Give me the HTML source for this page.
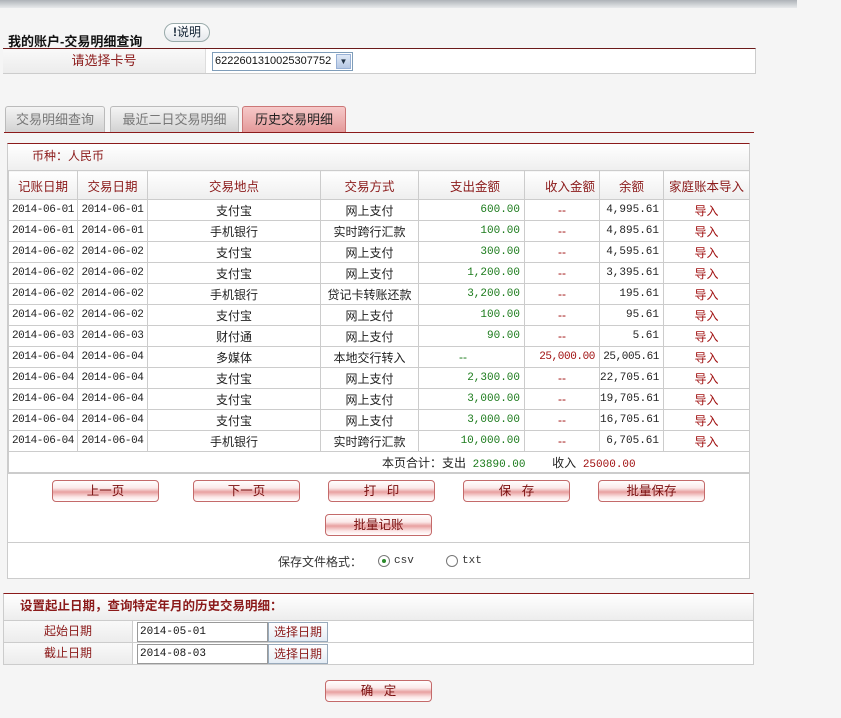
<!DOCTYPE html>
<html><head><meta charset="utf-8">
<style>
*{margin:0;padding:0;box-sizing:border-box}
body{width:841px;height:718px;background:#f5f5f5;font-family:"Liberation Sans","Noto Sans CJK SC",sans-serif;font-size:12px;color:#333;position:relative;overflow:hidden}
.a{position:absolute}
.topbar{left:0;top:0;width:797px;height:8px;background:linear-gradient(#aeb3b8,#e8eaec)}
.title{left:8px;top:31px;font-size:13px;font-weight:bold;color:#111}
.help{left:164px;top:23px;width:46px;height:19px;border:1px solid #9aa;border-radius:10px;background:linear-gradient(#fff,#e4e8ec);font-size:12px;line-height:17px;text-align:center;color:#123}
.cardrow{left:3px;top:48px;width:753px;height:26px;border-top:1px solid #6b1a1a;border-bottom:1px solid #ccc;border-right:1px solid #ccc;background:#fff}
.cardlbl{left:3px;top:49px;width:203px;height:24px;background:linear-gradient(#f9f9f9,#ececec);border-right:1px solid #ddd;color:#8b1a1a;text-align:center;line-height:24px;font-size:13px}
.sel{left:212px;top:52px;width:141px;height:19px;border:1px solid #7f9db9;background:#fff;font-size:11px;line-height:17px;padding-left:2px;color:#111;white-space:nowrap;overflow:hidden}
.selbtn{right:1px;top:1px;width:15px;height:15px;background:linear-gradient(#dfe8f6,#b6c8e4);border:1px solid #98b1d6;font-size:8px;line-height:13px;text-align:center;color:#234}
.tab{top:106px;height:26px;border:1px solid #bbb;border-bottom:none;border-radius:3px 3px 0 0;background:linear-gradient(#f4f4f4,#d2d2d2);color:#777;font-size:13px;text-align:center;line-height:25px}
.tab.on{background:linear-gradient(#f6c9c9,#e49a9a);color:#222;border-color:#c77}
.tabline{left:4px;top:132px;width:750px;height:1px;background:#8b1a1a}
.box{left:7px;top:143px;width:743px;height:436px;border:1px solid #ccc;border-top:1px solid #8b1a1a;background:#fff}
.cur{left:8px;top:144px;width:741px;height:26px;background:linear-gradient(#fff,#efefef);color:#8b1a1a;line-height:24px;padding-left:24px}
table{position:absolute;left:8px;top:170px;width:741px;border-collapse:collapse;table-layout:fixed;background:#fff}
td{border:1px solid #ccc;height:21px;font-size:12px;white-space:nowrap;overflow:hidden;text-align:center;color:#222;padding:0}
tr.h td{height:29px;color:#8b1a1a;background:linear-gradient(#fff,#eee);font-size:12.5px}
td.r{text-align:right;padding-right:4px}
.g{color:#1a7a1a}.rd{color:#a01010}.m{font-family:"Liberation Mono","Noto Sans CJK SC",monospace;font-size:11px}
td.d{letter-spacing:-0.4px}
.btn{height:22px;border:1px solid #c46a6a;border-radius:4px;background:linear-gradient(#fff 0%,#fbe9e9 35%,#e8a0a0 55%,#fbe6e6 80%,#fff 100%);color:#7a0e0e;text-align:center;line-height:20px;font-size:12.5px}
.div1{left:8px;top:542px;width:741px;height:1px;background:#ccc}
.radio{width:12px;height:12px;border:1px solid #777;border-radius:50%;background:#fff}
.radio.on::after{content:"";position:absolute;left:3px;top:3px;width:4px;height:4px;border-radius:50%;background:#2a8a2a}
.b2{left:3px;top:593px;width:751px;height:72px;border:1px solid #ccc;border-top:1px solid #8b1a1a;background:#fff}
.b2h{left:4px;top:594px;width:749px;height:27px;background:linear-gradient(#fff,#ededed);color:#8b1a1a;font-weight:bold;font-size:12.5px;padding-left:16px;line-height:24px;border-bottom:1px solid #ccc}
.b2r{left:4px;width:749px;height:22px;border-bottom:1px solid #ccc}
.b2l{left:4px;width:129px;height:21px;background:linear-gradient(#f9f9f9,#ececec);border-right:1px solid #ccc;color:#8b1a1a;text-align:center;line-height:20px}
.inp{left:137px;width:131px;height:20px;border:1px solid #999;background:#fff;padding-left:2px;line-height:18px;color:#111}
.pick{left:268px;width:60px;height:20px;border:1px solid #9ab;background:linear-gradient(#fff,#e4ecf4);color:#8b1a1a;text-align:center;line-height:18px}
</style></head><body>
<div class="a topbar"></div>
<div class="a title">我的账户-交易明细查询</div>
<div class="a help"><b style="color:#123">!</b>说明</div>
<div class="a cardrow"></div>
<div class="a cardlbl">请选择卡号</div>
<div class="a sel">6222601310025307752<div class="a selbtn">▼</div></div>
<div class="a tab" style="left:5px;width:100px">交易明细查询</div>
<div class="a tab" style="left:110px;width:129px">最近二日交易明细</div>
<div class="a tab on" style="left:242px;width:104px">历史交易明细</div>
<div class="a tabline"></div>
<div class="a box"></div>
<div class="a cur">币种：人民币</div>
<table>
<colgroup><col style="width:69px"><col style="width:70px"><col style="width:173px"><col style="width:98px"><col style="width:106px"><col style="width:75px"><col style="width:64px"><col style="width:86px"></colgroup>
<tr class="h"><td>记账日期</td><td>交易日期</td><td>交易地点</td><td>交易方式</td><td class="r" style="padding-right:24px">支出金额</td><td class="r">收入金额</td><td>余额</td><td>家庭账本导入</td></tr>
<tr><td class="m d">2014-06-01</td><td class="m d">2014-06-01</td><td>支付宝</td><td>网上支付</td><td class="r m g">600.00</td><td class="rd">--</td><td class="r m">4,995.61</td><td class="rd">导入</td></tr>
<tr><td class="m d">2014-06-01</td><td class="m d">2014-06-01</td><td>手机银行</td><td>实时跨行汇款</td><td class="r m g">100.00</td><td class="rd">--</td><td class="r m">4,895.61</td><td class="rd">导入</td></tr>
<tr><td class="m d">2014-06-02</td><td class="m d">2014-06-02</td><td>支付宝</td><td>网上支付</td><td class="r m g">300.00</td><td class="rd">--</td><td class="r m">4,595.61</td><td class="rd">导入</td></tr>
<tr><td class="m d">2014-06-02</td><td class="m d">2014-06-02</td><td>支付宝</td><td>网上支付</td><td class="r m g">1,200.00</td><td class="rd">--</td><td class="r m">3,395.61</td><td class="rd">导入</td></tr>
<tr><td class="m d">2014-06-02</td><td class="m d">2014-06-02</td><td>手机银行</td><td>贷记卡转账还款</td><td class="r m g">3,200.00</td><td class="rd">--</td><td class="r m">195.61</td><td class="rd">导入</td></tr>
<tr><td class="m d">2014-06-02</td><td class="m d">2014-06-02</td><td>支付宝</td><td>网上支付</td><td class="r m g">100.00</td><td class="rd">--</td><td class="r m">95.61</td><td class="rd">导入</td></tr>
<tr><td class="m d">2014-06-03</td><td class="m d">2014-06-03</td><td>财付通</td><td>网上支付</td><td class="r m g">90.00</td><td class="rd">--</td><td class="r m">5.61</td><td class="rd">导入</td></tr>
<tr><td class="m d">2014-06-04</td><td class="m d">2014-06-04</td><td>多媒体</td><td>本地交行转入</td><td class="g" style="text-align:left;padding-left:40px">--</td><td class="r m rd d">25,000.00</td><td class="r m d">25,005.61</td><td class="rd">导入</td></tr>
<tr><td class="m d">2014-06-04</td><td class="m d">2014-06-04</td><td>支付宝</td><td>网上支付</td><td class="r m g">2,300.00</td><td class="rd">--</td><td class="r m">22,705.61</td><td class="rd">导入</td></tr>
<tr><td class="m d">2014-06-04</td><td class="m d">2014-06-04</td><td>支付宝</td><td>网上支付</td><td class="r m g">3,000.00</td><td class="rd">--</td><td class="r m">19,705.61</td><td class="rd">导入</td></tr>
<tr><td class="m d">2014-06-04</td><td class="m d">2014-06-04</td><td>支付宝</td><td>网上支付</td><td class="r m g">3,000.00</td><td class="rd">--</td><td class="r m">16,705.61</td><td class="rd">导入</td></tr>
<tr><td class="m d">2014-06-04</td><td class="m d">2014-06-04</td><td>手机银行</td><td>实时跨行汇款</td><td class="r m g">10,000.00</td><td class="rd">--</td><td class="r m">6,705.61</td><td class="rd">导入</td></tr>
<tr><td colspan="8" style="text-align:left;padding-left:373px">本页合计：支出&nbsp;&nbsp;<span class="m g">23890.00</span>&nbsp;&nbsp;&nbsp;&nbsp;&nbsp;&nbsp;&nbsp;&nbsp;收入&nbsp;&nbsp;<span class="m rd">25000.00</span></td></tr>
</table>
<div class="a" style="left:8px;top:472px;width:741px;height:2px;background:#ccc"></div>
<div class="a btn" style="left:52px;top:480px;width:107px">上一页</div>
<div class="a btn" style="left:193px;top:480px;width:107px">下一页</div>
<div class="a btn" style="left:328px;top:480px;width:107px">打&nbsp;&nbsp;&nbsp;印</div>
<div class="a btn" style="left:463px;top:480px;width:107px">保&nbsp;&nbsp;&nbsp;存</div>
<div class="a btn" style="left:598px;top:480px;width:107px">批量保存</div>
<div class="a btn" style="left:325px;top:514px;width:107px">批量记账</div>
<div class="a div1"></div>
<div class="a" style="left:278px;top:553px">保存文件格式：</div>
<div class="a radio on" style="left:378px;top:555px"></div>
<div class="a m" style="left:394px;top:555px">csv</div>
<div class="a radio" style="left:446px;top:555px"></div>
<div class="a m" style="left:462px;top:555px">txt</div>
<div class="a b2"></div>
<div class="a b2h">设置起止日期，查询特定年月的历史交易明细：</div>
<div class="a b2r" style="top:621px"></div>
<div class="a b2l" style="top:621px">起始日期</div>
<div class="a inp m" style="top:622px">2014-05-01</div>
<div class="a pick" style="top:622px">选择日期</div>
<div class="a b2l" style="top:643px">截止日期</div>
<div class="a inp m" style="top:644px">2014-08-03</div>
<div class="a pick" style="top:644px">选择日期</div>
<div class="a btn" style="left:325px;top:680px;width:107px">确&nbsp;&nbsp;&nbsp;定</div>
</body></html>
